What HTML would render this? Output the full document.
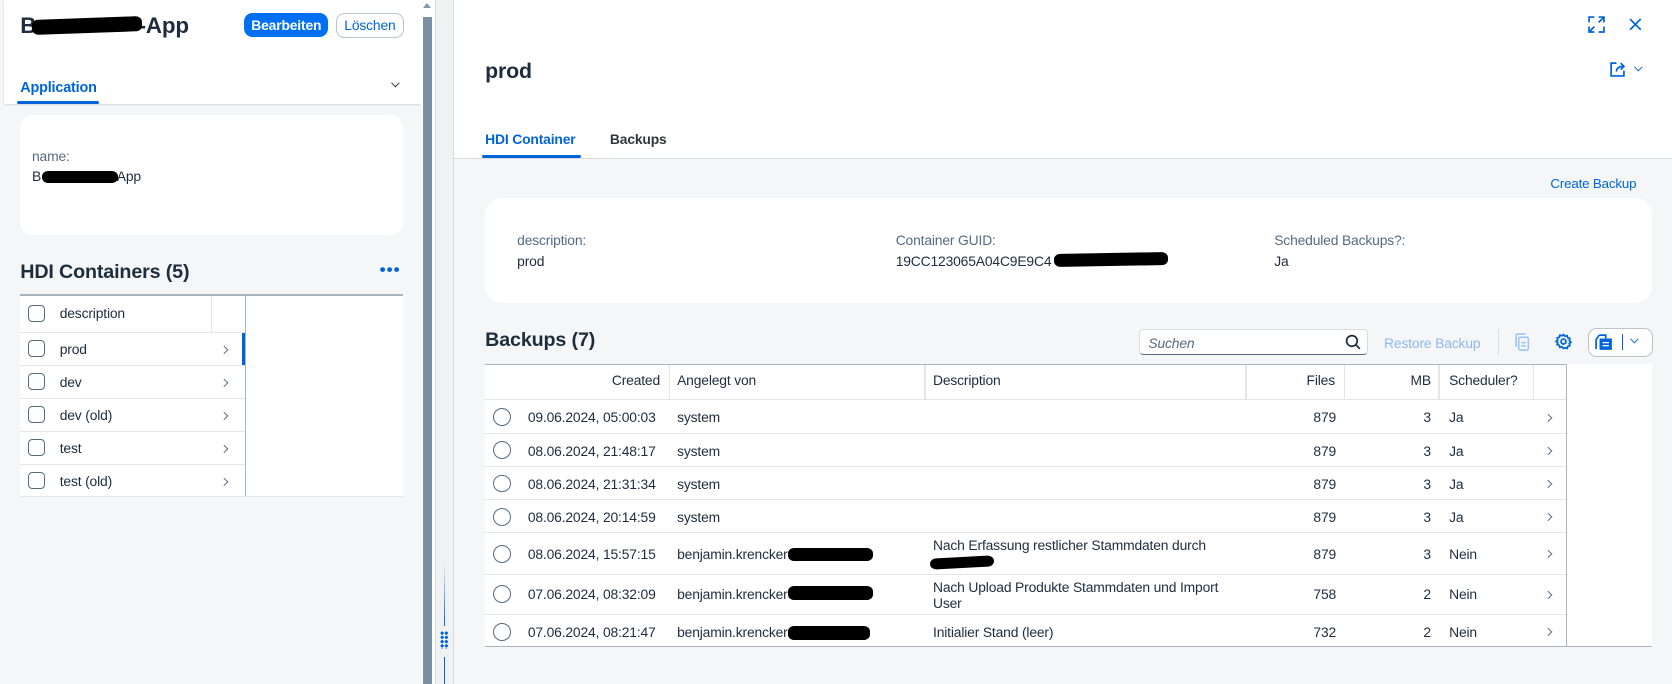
<!DOCTYPE html>
<html><head><meta charset="utf-8">
<style>
html,body{margin:0;padding:0;width:1672px;height:684px;overflow:hidden;background:#f5f6f7}
#root{zoom:1.0663;width:1568px;height:642px;position:relative;font-family:"Liberation Sans",sans-serif;color:#1d2d3e;font-size:13px;letter-spacing:-0.15px}
.a{position:absolute;white-space:nowrap}
.blob{position:absolute;background:#000;border-radius:6px/5px}
.cb{position:absolute;width:14px;height:14px;border:1px solid #556b82;border-radius:4px;background:#fff}
.rad{position:absolute;width:15px;height:15px;border:1px solid #556b82;border-radius:50%;background:#fff}
.chev{position:absolute;width:5px;height:5px;border-right:1.3px solid #556b82;border-top:1.3px solid #556b82;transform:rotate(45deg);margin-top:2px}
.hl{position:absolute;height:1px;background:#e5e5e5}
.vl{position:absolute;width:1px;background:#e5e5e5}
.lbl{color:#556b82}
</style></head><body><div id="root">

<!-- LEFT PANEL -->
<div class="a" style="left:0;top:0;width:395px;height:642px;background:#f5f6f7"></div>
<div class="a" style="left:4px;top:0;width:391px;height:98px;background:#fff;box-shadow:0 1px 2px rgba(0,0,0,.15)"></div>
<div class="a" style="left:19px;top:12px;font-size:21px;font-weight:bold;color:#1d2d3e">B<span style="display:inline-block;width:96px"></span>-App</div>
<div class="blob" style="left:30px;top:17px;width:103px;height:14px;transform:rotate(-2deg)"></div>
<div class="a" style="left:229px;top:12px;width:79px;height:23px;background:#0070f2;border-radius:8px;color:#fff;font-weight:bold;text-align:center;line-height:23px">Bearbeiten</div>
<div class="a" style="left:315px;top:12px;width:62px;height:22px;border:1px solid #bcc3ca;border-radius:8px;color:#0064d9;text-align:center;line-height:22px;background:#fff">Löschen</div>
<div class="a" style="left:19px;top:75px;font-weight:bold;color:#0064d9;font-size:13.5px">Application</div>
<div class="a" style="left:16px;top:95px;width:77px;height:3px;background:#0064d9;border-radius:2px"></div>
<div class="chev" style="left:368px;top:73px;transform:rotate(135deg);border-color:#1d2d3e"></div>

<div class="a" style="left:19px;top:108px;width:359px;height:112px;background:#fff;border-radius:12px"></div>
<div class="a lbl" style="left:30px;top:139px">name:</div>
<div class="a" style="left:30px;top:158px">B<span style="display:inline-block;width:71px"></span>App</div>
<div class="blob" style="left:39px;top:160px;width:72px;height:12px"></div>

<div class="a" style="left:19px;top:245px;font-size:18.5px;font-weight:bold">HDI Containers (5)</div>
<div class="a" style="left:356px;top:244px;color:#0064d9;font-size:16px;font-weight:bold;letter-spacing:1px">•••</div>

<div class="a" style="left:19px;top:277px;width:359px;height:188px;background:#fff"></div>
<div class="a" style="left:19px;top:276px;width:359px;height:2px;background:#a9b4be"></div>
<div class="a" style="left:230px;top:277px;width:1px;height:188px;background:#a9b4be"></div>
<div class="vl" style="left:198px;top:278px;height:33px"></div>
<div class="cb" style="left:26px;top:286px"></div>
<div class="a" style="left:56px;top:286px">description</div>
<div class="hl" style="left:19px;top:311px;width:211px"></div>
<div class="a" style="left:227px;top:312px;width:3px;height:30px;background:#0064d9"></div>

<div class="cb" style="left:26px;top:319px"></div><div class="a" style="left:56px;top:320px">prod</div><div class="chev" style="left:207px;top:323px"></div>
<div class="hl" style="left:19px;top:342px;width:211px"></div>
<div class="cb" style="left:26px;top:350px"></div><div class="a" style="left:56px;top:351px">dev</div><div class="chev" style="left:207px;top:354px"></div>
<div class="hl" style="left:19px;top:373px;width:211px"></div>
<div class="cb" style="left:26px;top:381px"></div><div class="a" style="left:56px;top:382px">dev (old)</div><div class="chev" style="left:207px;top:385px"></div>
<div class="hl" style="left:19px;top:404px;width:211px"></div>
<div class="cb" style="left:26px;top:412px"></div><div class="a" style="left:56px;top:413px">test</div><div class="chev" style="left:207px;top:416px"></div>
<div class="hl" style="left:19px;top:435px;width:211px"></div>
<div class="cb" style="left:26px;top:443px"></div><div class="a" style="left:56px;top:444px">test (old)</div><div class="chev" style="left:207px;top:447px"></div>
<div class="hl" style="left:19px;top:465px;width:359px"></div>

<!-- scrollbar -->
<div class="a" style="left:395px;top:0;width:13px;height:642px;background:#fff"></div>
<div class="a" style="left:397px;top:16px;width:8px;height:626px;background:#7b8fa3"></div>
<div class="a" style="left:397px;top:3px;width:0;height:0;border-left:4px solid transparent;border-right:4px solid transparent;border-bottom:5px solid #8696a9"></div>

<!-- splitter -->
<div class="a" style="left:408px;top:0;width:16px;height:642px;background:#eff1f2;border-left:1px solid #d9dcdf;border-right:1px solid #d9dcdf"></div>
<div class="a" style="left:416px;top:527px;width:1px;height:60px;background:linear-gradient(#eff1f2,#0064d9)"></div>
<div class="a" style="left:416px;top:616px;width:1px;height:26px;background:#0064d9"></div>
<div class="a" style="left:413px;top:592px;width:8px;height:17px;background:radial-gradient(circle,#0064d9 1.4px,transparent 1.6px) 0 0/4px 4px"></div>

<!-- RIGHT PANEL -->
<div class="a" style="left:426px;top:0;width:1142px;height:148px;background:#fff;border-bottom:1px solid #d9dcdf"></div>
<svg class="a" style="left:1489px;top:15px" width="16" height="16" viewBox="0 0 16 16" fill="none" stroke="#0064d9" stroke-width="1.6"><path d="M1 6V1h5M10 1h5v5M15 10v5h-5M6 15H1v-5M15 1L10 6M1 15l5-5"/></svg>
<svg class="a" style="left:1528px;top:17px" width="12" height="12" viewBox="0 0 12 12" stroke="#0064d9" stroke-width="1.6"><path d="M1 1l10 10M11 1L1 11"/></svg>
<svg class="a" style="left:1509px;top:57px" width="16" height="16" viewBox="0 0 16 16" fill="none" stroke="#0064d9" stroke-width="1.6"><path d="M7 2H2v12h12V9"/><path d="M7 10c0-4 3-5 7-5M11 2l3 3-3 3"/></svg>
<div class="chev" style="left:1533px;top:58px;transform:rotate(135deg);border-color:#0064d9"></div>
<div class="a" style="left:455px;top:55px;font-size:20px;font-weight:bold">prod</div>
<div class="a" style="left:455px;top:123px;font-weight:bold;color:#0064d9">HDI Container</div>
<div class="a" style="left:452px;top:145px;width:93px;height:3px;background:#0064d9;border-radius:2px"></div>
<div class="a" style="left:572px;top:123px;font-weight:bold;color:#32363a">Backups</div>

<div class="a" style="left:1454px;top:165px;color:#0064d9;font-size:12.5px">Create Backup</div>
<div class="a" style="left:455px;top:186px;width:1094px;height:98px;background:#fff;border-radius:16px"></div>
<div class="a lbl" style="left:485px;top:218px">description:</div>
<div class="a" style="left:485px;top:237px">prod</div>
<div class="a lbl" style="left:840px;top:218px">Container GUID:</div>
<div class="a" style="left:840px;top:237px">19CC123065A04C9E9C4</div>
<div class="blob" style="left:988px;top:237px;width:107px;height:12px;transform:rotate(-1deg)"></div>
<div class="a lbl" style="left:1195px;top:218px">Scheduled Backups?:</div>
<div class="a" style="left:1195px;top:237px">Ja</div>

<div class="a" style="left:455px;top:309px;font-size:18.5px;font-weight:bold">Backups (7)</div>
<div class="a" style="left:1068px;top:309px;width:213px;height:22px;background:#fff;border:1px solid #d9dcdf;border-bottom:1px solid #556b82;border-radius:4px"></div>
<div class="a" style="left:1077px;top:314px;font-style:italic;color:#556b82">Suchen</div>
<svg class="a" style="left:1261px;top:313px" width="15" height="15" viewBox="0 0 15 15" fill="none" stroke="#1d2d3e" stroke-width="1.6"><circle cx="6.5" cy="6.5" r="5"/><path d="M10 10l4 4"/></svg>
<div class="a" style="left:1298px;top:314px;color:#8fb8f0">Restore Backup</div>
<div class="a" style="left:1405px;top:309px;width:1px;height:24px;background:#d9dcdf"></div>
<svg class="a" style="left:1421px;top:312px" width="14" height="17" viewBox="0 0 14 17" fill="none" stroke="#9fc3f2" stroke-width="1.5"><rect x="3.5" y="4" width="9" height="12" rx="1.5"/><path d="M1 13V2.5A1.5 1.5 0 0 1 2.5 1H10M6 9h4M6 12h4"/></svg>
<svg class="a" style="left:1458px;top:312px" width="16" height="16" viewBox="0 0 16 16" fill="none" stroke="#0064d9" stroke-width="1.6"><circle cx="8" cy="8" r="2.3"/><path d="M8 1.5l1.4 1.6 2-.6.6 2 2 .6-.6 2 1.6 1.4-1.6 1.4.6 2-2 .6-.6 2-2-.6L8 14.5l-1.4-1.6-2 .6-.6-2-2-.6.6-2L1 8l1.6-1.4-.6-2 2-.6.6-2 2 .6z"/></svg>
<div class="a" style="left:1489px;top:308px;width:59px;height:25px;border:1px solid #bcc3ca;border-radius:8px;background:#fff"></div>
<svg class="a" style="left:1495px;top:312px" width="18" height="17" viewBox="0 0 18 17" fill="none" stroke="#0064d9" stroke-width="1.6"><path d="M5 2h6v3M2 15V6l3-4"/><rect x="6" y="6" width="10" height="9" fill="#0064d9"/><path d="M8 9h6M8 12h6" stroke="#fff" stroke-width="1.2"/></svg>
<div class="a" style="left:1521px;top:313px;width:1px;height:15px;background:#0064d9"></div>
<div class="chev" style="left:1530px;top:313px;transform:rotate(135deg);border-color:#0064d9"></div>

<!-- backups table -->
<div class="a" style="left:455px;top:341px;width:1094px;height:266px;background:#fff"></div>
<div class="a" style="left:455px;top:341px;width:1015px;height:1px;background:#a9b4be"></div>
<div class="a" style="left:1469px;top:341px;width:1px;height:266px;background:#a9b4be"></div>
<div class="a" style="left:455px;top:606px;width:1094px;height:1px;background:#a9b4be"></div>
<div class="vl" style="left:627px;top:342px;height:32px"></div>
<div class="vl" style="left:867px;top:342px;height:32px"></div>
<div class="vl" style="left:1168px;top:342px;height:32px"></div>
<div class="vl" style="left:1260px;top:342px;height:32px"></div>
<div class="vl" style="left:1349px;top:342px;height:32px"></div>
<div class="vl" style="left:1438px;top:342px;height:32px"></div>
<div class="a" style="left:560px;top:349px;width:59px;text-align:right">Created</div>
<div class="a" style="left:635px;top:349px">Angelegt von</div>
<div class="a" style="left:875px;top:349px">Description</div>
<div class="a" style="left:1200px;top:349px;width:52px;text-align:right">Files</div>
<div class="a" style="left:1290px;top:349px;width:52px;text-align:right">MB</div>
<div class="a" style="left:1359px;top:349px">Scheduler?</div>
<div class="hl" style="left:455px;top:374px;width:1014px"></div>

<!-- rows -->
<div class="rad" style="left:462px;top:383px"></div><div class="a" style="left:495px;top:384px">09.06.2024, 05:00:03</div><div class="a" style="left:635px;top:384px">system</div><div class="a" style="left:1200px;top:384px;width:53px;text-align:right">879</div><div class="a" style="left:1290px;top:384px;width:52px;text-align:right">3</div><div class="a" style="left:1359px;top:384px">Ja</div><div class="chev" style="left:1449px;top:387px"></div>
<div class="hl" style="left:455px;top:406px;width:1014px"></div>
<div class="rad" style="left:462px;top:414px"></div><div class="a" style="left:495px;top:415px">08.06.2024, 21:48:17</div><div class="a" style="left:635px;top:415px">system</div><div class="a" style="left:1200px;top:415px;width:53px;text-align:right">879</div><div class="a" style="left:1290px;top:415px;width:52px;text-align:right">3</div><div class="a" style="left:1359px;top:415px">Ja</div><div class="chev" style="left:1449px;top:418px"></div>
<div class="hl" style="left:455px;top:437px;width:1014px"></div>
<div class="rad" style="left:462px;top:445px"></div><div class="a" style="left:495px;top:446px">08.06.2024, 21:31:34</div><div class="a" style="left:635px;top:446px">system</div><div class="a" style="left:1200px;top:446px;width:53px;text-align:right">879</div><div class="a" style="left:1290px;top:446px;width:52px;text-align:right">3</div><div class="a" style="left:1359px;top:446px">Ja</div><div class="chev" style="left:1449px;top:449px"></div>
<div class="hl" style="left:455px;top:468px;width:1014px"></div>
<div class="rad" style="left:462px;top:476px"></div><div class="a" style="left:495px;top:477px">08.06.2024, 20:14:59</div><div class="a" style="left:635px;top:477px">system</div><div class="a" style="left:1200px;top:477px;width:53px;text-align:right">879</div><div class="a" style="left:1290px;top:477px;width:52px;text-align:right">3</div><div class="a" style="left:1359px;top:477px">Ja</div><div class="chev" style="left:1449px;top:480px"></div>
<div class="hl" style="left:455px;top:499px;width:1014px"></div>
<div class="rad" style="left:462px;top:511px"></div><div class="a" style="left:495px;top:512px">08.06.2024, 15:57:15</div><div class="a" style="left:635px;top:512px">benjamin.krencker</div><div class="blob" style="left:739px;top:514px;width:80px;height:12px"></div><div class="a" style="left:875px;top:504px">Nach Erfassung restlicher Stammdaten durch</div><div class="blob" style="left:872px;top:522px;width:60px;height:10px;transform:rotate(-3deg)"></div><div class="a" style="left:1200px;top:512px;width:53px;text-align:right">879</div><div class="a" style="left:1290px;top:512px;width:52px;text-align:right">3</div><div class="a" style="left:1359px;top:512px">Nein</div><div class="chev" style="left:1449px;top:515px"></div>
<div class="hl" style="left:455px;top:538px;width:1014px"></div>
<div class="rad" style="left:462px;top:549px"></div><div class="a" style="left:495px;top:550px">07.06.2024, 08:32:09</div><div class="a" style="left:635px;top:550px">benjamin.krencker</div><div class="blob" style="left:739px;top:550px;width:80px;height:13px"></div><div class="a" style="left:875px;top:543px">Nach Upload Produkte Stammdaten und Import</div><div class="a" style="left:875px;top:558px">User</div><div class="a" style="left:1200px;top:550px;width:53px;text-align:right">758</div><div class="a" style="left:1290px;top:550px;width:52px;text-align:right">2</div><div class="a" style="left:1359px;top:550px">Nein</div><div class="chev" style="left:1449px;top:553px"></div>
<div class="hl" style="left:455px;top:576px;width:1014px"></div>
<div class="rad" style="left:462px;top:584px"></div><div class="a" style="left:495px;top:585px">07.06.2024, 08:21:47</div><div class="a" style="left:635px;top:585px">benjamin.krencker</div><div class="blob" style="left:739px;top:587px;width:77px;height:13px"></div><div class="a" style="left:875px;top:585px">Initialier Stand (leer)</div><div class="a" style="left:1200px;top:585px;width:53px;text-align:right">732</div><div class="a" style="left:1290px;top:585px;width:52px;text-align:right">2</div><div class="a" style="left:1359px;top:585px">Nein</div><div class="chev" style="left:1449px;top:588px"></div>

</div></body></html>
